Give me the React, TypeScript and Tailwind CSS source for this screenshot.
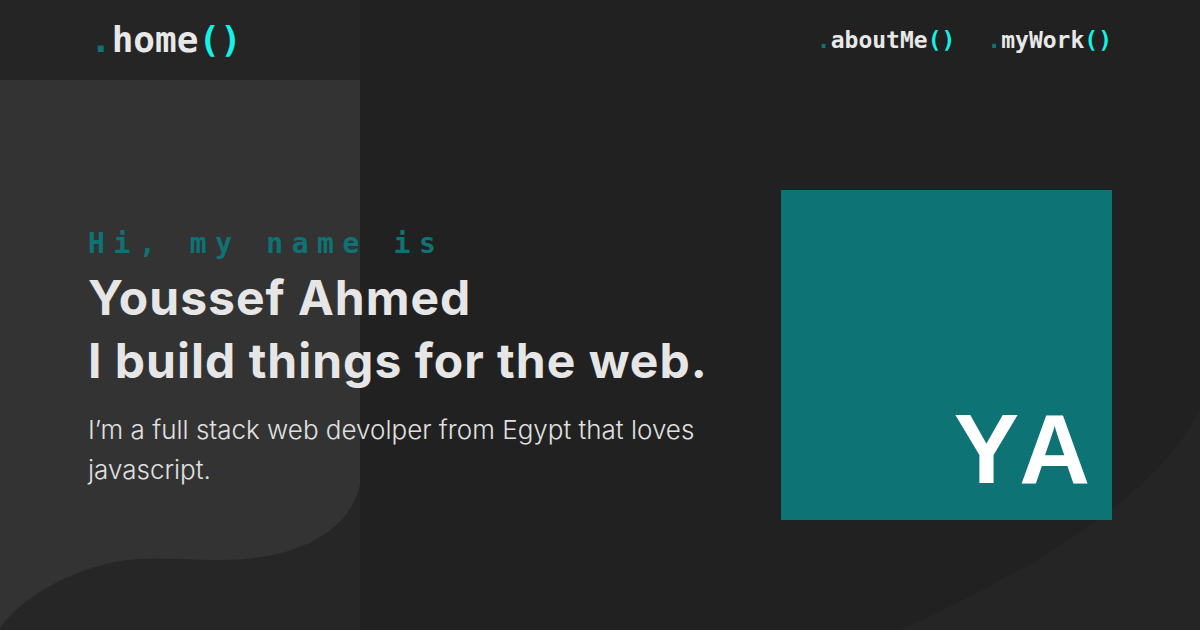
import React from 'react';

const mono = "font-['DejaVu_Sans_Mono',monospace]";

function NavItem({ name, big }: { name: string; big?: boolean }) {
  return (
    <a className={`${mono} font-bold ${big ? 'text-[36px]' : 'text-[23px]'}`}>
      <span className="text-[#0e7374]">.</span>
      <span className="text-[#e8e8e8]">{name}</span>
      <span className="text-[#13f2e3]">()</span>
    </a>
  );
}

export default function App() {
  return (
    <div className="relative w-[1200px] h-[630px] overflow-hidden bg-[#212121]">
      {/* background shapes */}
      <svg className="absolute inset-0" width="1200" height="630" viewBox="0 0 1200 630">
        <rect x="0" y="0" width="360" height="80" fill="#252525" />
        <rect x="0" y="80" width="360" height="550" fill="#333333" />
        <path
          d="M360 485 C 350 530, 300 560, 220 560 C 170 560, 150 555, 110 563 C 60 575, 20 600, 0 628 L0 630 L360 630 Z"
          fill="#262626"
        />
        <path d="M900 630 C 1020 575, 1150 505, 1200 410 L1200 630 Z" fill="#252525" />
      </svg>

      <header className="relative flex h-20 items-center justify-between pl-[90px] pr-[88px]">
        <NavItem name="home" big />
        <nav className="flex items-center gap-8">
          <NavItem name="aboutMe" />
          <NavItem name="myWork" />
        </nav>
      </header>

      <main className="relative flex items-start justify-between pl-[88px] pr-[88px]">
        <div className="flex flex-col pt-[146px]">
          <p className={`${mono} font-bold text-[28px] leading-[36px] tracking-[8.6px] text-[#0e7374]`}>
            Hi, my name is
          </p>
          <h1 className="mt-1 font-['Inter',sans-serif] font-bold text-[48px] leading-[63px] tracking-[1px] text-[#e6e6e6]">
            <span className="block">Youssef Ahmed</span>
            <span className="block">I build things for the web.</span>
          </h1>
          <p className="mt-[18px] font-['Inter',sans-serif] font-light text-[26px] leading-[40px] text-[#e0e0e0]">
            I’m a full stack web devolper from Egypt that loves
            <br />
            javascript.
          </p>
        </div>

        <div className="mt-[110px] flex h-[330px] w-[331px] items-end justify-end bg-[#0e7374] pb-[22px] pr-[22px]">
          <span className="font-['Liberation_Sans',Arial,sans-serif] font-bold text-[98px] leading-none text-white [font-kerning:none]">
            YA
          </span>
        </div>
      </main>
    </div>
  );
}
